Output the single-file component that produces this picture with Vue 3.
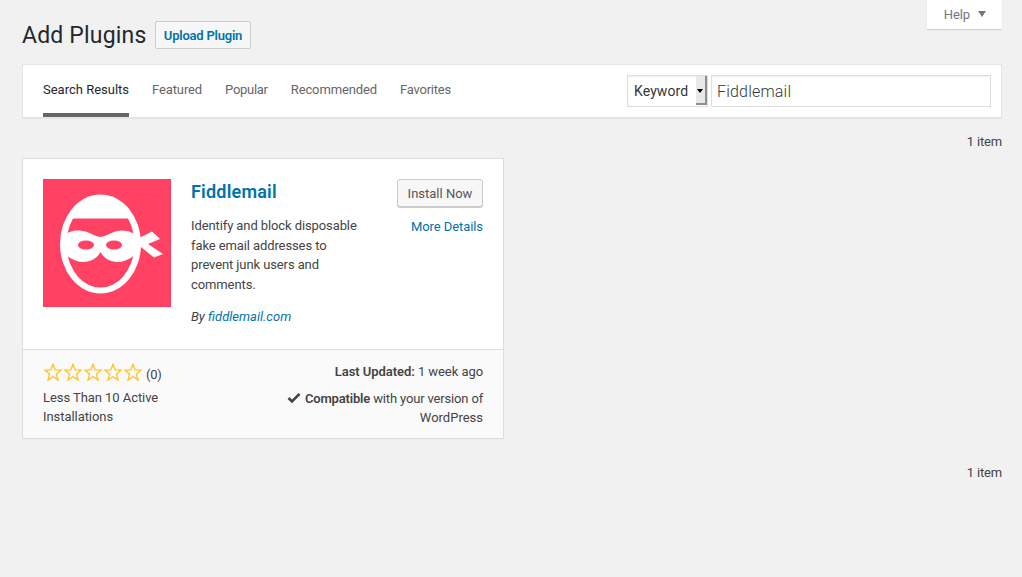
<script setup>
const tabs = ['Search Results', 'Featured', 'Popular', 'Recommended', 'Favorites']
const stars = [1, 2, 3, 4, 5]
</script>

<template>
  <div class="page">
    <div class="help-row">
      <button class="help">Help <i class="caret"></i></button>
    </div>
    <div class="heading">
      <h1>Add Plugins</h1>
      <a class="upload">Upload Plugin</a>
    </div>
    <div class="filter">
      <ul class="tabs">
        <li v-for="(t, i) in tabs" :key="t" :class="{ current: i === 0 }">{{ t }}</li>
      </ul>
      <form class="search">
        <div class="select">
          <span>Keyword</span>
          <span class="select-btn"><i></i></span>
        </div>
        <input class="input" value="Fiddlemail" />
      </form>
    </div>
    <div class="count top">1 item</div>
    <div class="card">
      <div class="card-top">
        <svg class="logo" viewBox="0 0 128 128" width="128" height="128">
          <rect width="128" height="128" fill="#ff4163" />
          <ellipse cx="57.5" cy="65" rx="40.5" ry="49.5" fill="#fff" />
          <path d="M30 39.5 L85 39.5 A34 43.5 0 1 1 30 39.5 Z" fill="#ff4163" />
          <path d="M18 58 C26 52 31 51 37 51.5 C45 52 51 57 57.5 58 C64 57 70 52 78 51.5 C85 51 90 54 98 58 L109 52.5 L117 60 L105 65 L120 75 L111 78.5 L98 68 C93 76 86 82 76 83 C66 83.5 60 78 57.5 73 C55 78 49 83.5 39 83 C29 82 22 76 18 69 Z" fill="#fff" />
          <ellipse cx="43" cy="66" rx="8" ry="4.5" fill="#ff4163" />
          <ellipse cx="71" cy="66" rx="8" ry="4.5" fill="#ff4163" />
        </svg>
        <div class="info">
          <h3>Fiddlemail</h3>
          <p class="desc">Identify and block disposable fake email addresses to prevent junk users and comments.</p>
          <p class="author"><cite>By <a>fiddlemail.com</a></cite></p>
        </div>
        <div class="actions">
          <a class="install">Install Now</a>
          <a class="details">More Details</a>
        </div>
      </div>
      <div class="card-bottom">
        <div class="left">
          <div class="rating">
            <svg v-for="s in stars" :key="s" class="star" viewBox="0 0 20 20" width="20" height="20">
              <path d="M10 1.2 L12.2 6.9 L17.9 7.2 L13.5 11 L15 17 L10 13.8 L5 17 L6.5 11 L2.1 7.2 L7.8 6.9 Z" fill="none" stroke="#ffb900" stroke-opacity="0.85" stroke-width="1.3" />
            </svg>
            <span class="num">(0)</span>
          </div>
          <div class="installs">Less Than 10 Active Installations</div>
        </div>
        <div class="right">
          <div class="updated"><strong>Last Updated:</strong> 1 week ago</div>
          <div class="compat">
            <svg class="check" viewBox="0 0 14 12" width="14" height="12"><path d="M1.5 6 L5 9.5 L12.5 1.8" fill="none" stroke="#444" stroke-width="2.6" /></svg>
            <strong>Compatible</strong> with your version of <span class="wp">WordPress</span>
          </div>
        </div>
      </div>
    </div>
    <div class="count bottom">1 item</div>
  </div>
</template>

<style>
html, body { margin: 0; background: #f1f1f1; }
</style>

<style scoped>
.page {
  box-sizing: border-box;
  height: 577px;
  overflow: hidden;
  padding: 0 20px 0 22px;
  background: #f1f1f1;
  font-family: Roboto, sans-serif;
  font-size: 13px;
  line-height: 19px;
  color: #444;
}
.help-row { display: flex; justify-content: flex-end; height: 0; }
.help {
  box-sizing: border-box;
  width: 75px;
  height: 29px;
  padding: 0 0 0 1px;
  border: none;
  background: #fff;
  box-shadow: 0 1px 1px -1px rgba(0, 0, 0, 0.2), 0 1px 1px rgba(0, 0, 0, 0.1);
  color: #72777c;
  font: 13px Roboto, sans-serif;
  letter-spacing: -0.1px;
}
.caret {
  display: inline-block;
  width: 0;
  height: 0;
  margin-left: 5px;
  vertical-align: 2px;
  border-left: 4.5px solid transparent;
  border-right: 4.5px solid transparent;
  border-top: 6px solid #72777c;
}
.heading { display: flex; align-items: center; padding-top: 21px; height: 28px; }
h1 {
  margin: 1px 4px 0 0;
  font-size: 23px;
  font-weight: 400;
  line-height: 28px;
  letter-spacing: 0.18px;
  color: #23282d;
  width: 129px;
  white-space: nowrap;
}
.upload {
  box-sizing: border-box;
  height: 28px;
  width: 96px;
  text-align: center;
  border: 1px solid #ccc;
  border-radius: 2px;
  background: #f7f7f7;
  color: #0073aa;
  font-weight: 600;
  font-size: 13px;
  letter-spacing: -0.22px;
  line-height: 28px;
}
.filter {
  box-sizing: border-box;
  display: flex;
  justify-content: space-between;
  margin-top: 15px;
  height: 54px;
  border: 1px solid #e5e5e5;
  background: #fff;
  box-shadow: 0 1px 1px rgba(0, 0, 0, 0.04);
  padding: 0 10px 0 20px;
}
.tabs { display: flex; gap: 23px; margin: 0; padding: 0; list-style: none; }
.tabs li {
  box-sizing: border-box;
  height: 52px;
  padding-top: 15px;
  color: #666;
  letter-spacing: -0.12px;
}
.tabs li:nth-child(3) { letter-spacing: -0.28px; }
.tabs li:nth-child(5) { letter-spacing: -0.22px; }
.tabs li.current {
  color: #23282d;
  letter-spacing: 0;
  border-bottom: 4px solid #666;
}
.search { display: flex; gap: 3px; padding-top: 10px; }
.select {
  box-sizing: border-box;
  display: flex;
  justify-content: space-between;
  width: 81px;
  height: 32px;
  border: 1px solid #ddd;
  background: #fff;
  box-shadow: inset 0 1px 2px rgba(0, 0, 0, 0.07);
  color: #32373c;
  font-size: 14px;
  letter-spacing: 0.1px;
  line-height: 31px;
  padding-left: 6px;
}
.select-btn {
  position: relative;
  display: block;
  width: 11px;
  height: 29px;
  margin-top: 0;
  background: #e8e8e8;
  border-right: 2px solid #8f8f8f;
  border-bottom: 2px solid #8f8f8f;
  box-sizing: border-box;
}
.select-btn i {
  position: absolute;
  left: 1px;
  top: 13px;
  border-left: 3.5px solid transparent;
  border-right: 3.5px solid transparent;
  border-top: 4px solid #000;
}
.input {
  box-sizing: border-box;
  width: 280px;
  height: 32px;
  border: 1px solid #ddd;
  background: #fff;
  box-shadow: inset 0 1px 2px rgba(0, 0, 0, 0.07);
  color: #32373c;
  font: 300 16px Roboto, sans-serif;
  letter-spacing: 0.2px;
  padding: 0 5px;
  outline: none;
}
.count { text-align: right; height: 19px; letter-spacing: -0.15px; }
.count.top { margin-top: 14px; }
.count.bottom { margin-top: 24px; }
.card {
  box-sizing: border-box;
  width: 482px;
  height: 281px;
  margin-top: 7px;
  border: 1px solid #ddd;
  background: #fff;
  box-shadow: 0 1px 1px -1px rgba(0, 0, 0, 0.1);
  display: flex;
  flex-direction: column;
}
.card-top { display: flex; height: 190px; padding: 20px 20px 0; box-sizing: border-box; }
.logo { flex: none; display: block; }
.info { width: 180px; margin-left: 20px; flex: none; }
h3 {
  margin: 1px 0 0;
  font-size: 18px;
  font-weight: 600;
  line-height: 24px;
  letter-spacing: 0.2px;
  color: #0073aa;
}
.desc { margin: 12px 0 0; line-height: 19.5px; color: #444; letter-spacing: -0.1px; }
.author { margin: 13px 0 0; }
cite { font-style: italic; }
a { color: #0073aa; }
.actions {
  flex: 1;
  display: flex;
  flex-direction: column;
  align-items: flex-end;
}
.install {
  box-sizing: border-box;
  width: 86px;
  height: 28px;
  text-align: center;
  border: 1px solid #ccc;
  border-radius: 3px;
  background: #f7f7f7;
  box-shadow: 0 1px 0 #ccc;
  color: #555;
  line-height: 28px;
}
.details { margin-top: 10px; letter-spacing: -0.08px; }
.card-bottom {
  flex: 1;
  box-sizing: border-box;
  display: flex;
  justify-content: space-between;
  border-top: 1px solid #ddd;
  background: #fafafa;
  padding: 12px 20px 0;
}
.left { width: 150px; }
.rating { display: flex; align-items: center; height: 22px; }
.star { display: block; flex: none; }
.num { margin-left: 3px; margin-top: 3px; letter-spacing: -0.2px; }
.installs { margin-top: 4px; letter-spacing: -0.06px; }
.right { width: 210px; text-align: right; }
.updated { height: 19px; letter-spacing: -0.06px; }
.updated strong, .compat strong { font-weight: 600; }
.compat { margin-top: 8px; letter-spacing: -0.16px; }
.wp { letter-spacing: 0; }
.check { vertical-align: -1px; margin-right: 4px; }
</style>
